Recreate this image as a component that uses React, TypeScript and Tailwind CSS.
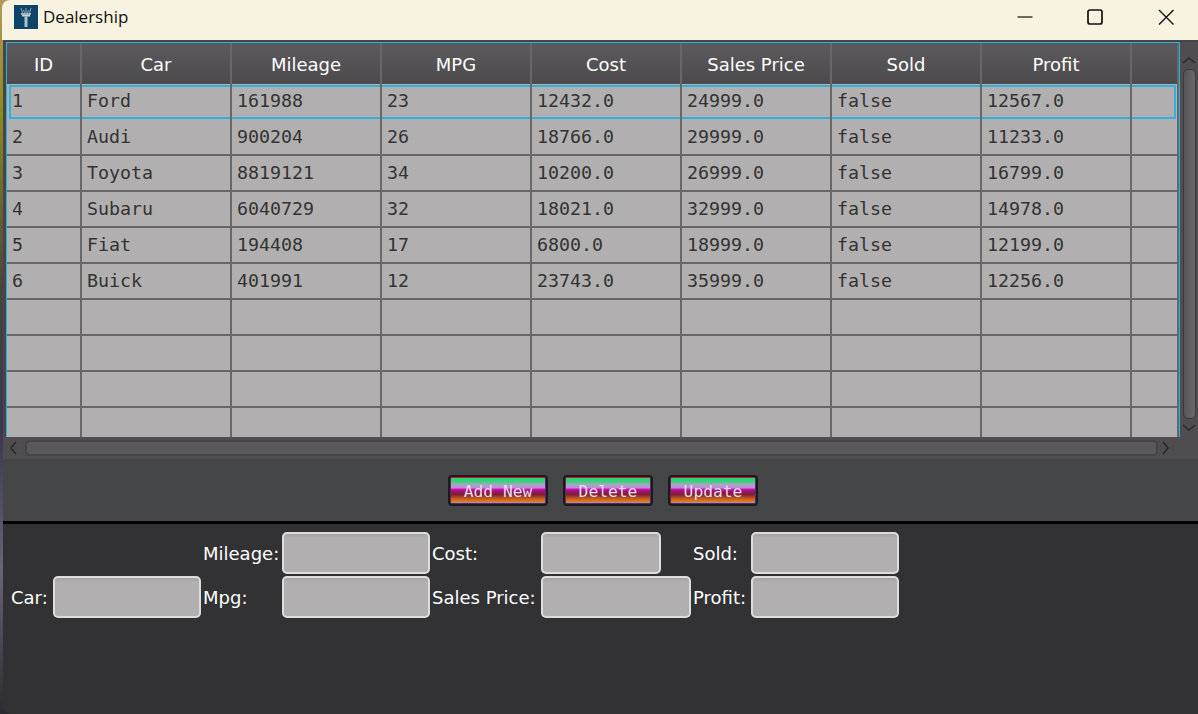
import React from 'react';

const COLUMNS = [
  { label: 'ID', width: 'w-[75px]' },
  { label: 'Car', width: 'w-[150px]' },
  { label: 'Mileage', width: 'w-[150px]' },
  { label: 'MPG', width: 'w-[150px]' },
  { label: 'Cost', width: 'w-[150px]' },
  { label: 'Sales Price', width: 'w-[150px]' },
  { label: 'Sold', width: 'w-[150px]' },
  { label: 'Profit', width: 'w-[150px]' },
  { label: '', width: 'flex-1' },
];

const CARS = [
  ['1', 'Ford', '161988', '23', '12432.0', '24999.0', 'false', '12567.0', ''],
  ['2', 'Audi', '900204', '26', '18766.0', '29999.0', 'false', '11233.0', ''],
  ['3', 'Toyota', '8819121', '34', '10200.0', '26999.0', 'false', '16799.0', ''],
  ['4', 'Subaru', '6040729', '32', '18021.0', '32999.0', 'false', '14978.0', ''],
  ['5', 'Fiat', '194408', '17', '6800.0', '18999.0', 'false', '12199.0', ''],
  ['6', 'Buick', '401991', '12', '23743.0', '35999.0', 'false', '12256.0', ''],
  ['', '', '', '', '', '', '', '', ''],
  ['', '', '', '', '', '', '', '', ''],
  ['', '', '', '', '', '', '', '', ''],
  ['', '', '', '', '', '', '', '', ''],
];

const TorchLogo = () => (
  <svg width="24" height="24" viewBox="0 0 24 24" className="shrink-0">
    <rect width="24" height="24" fill="#0d4468" />
    <path d="M7 3l1.500 5M9.500 5l1 3M12 3v5M14.500 5l-1 3M17 3l-1.500 5" stroke="#8ea6b3" strokeWidth="1" fill="none" />
    <rect x="7" y="8" width="10" height="2" fill="#9db1bc" />
    <rect x="8" y="10" width="8" height="1.500" fill="#c9d5da" />
    <rect x="10.500" y="11.500" width="3" height="10.500" fill="#aebfc8" />
  </svg>
);

const GradientButton = ({ label, width }: { label: string; width: string }) => (
  <button className={`${width} h-[31px] overflow-hidden rounded-[4px] border-2 border-[#1a1a20]`}>
    <span className="flex h-full w-full items-center justify-center rounded-[2px] border-t border-b border-x border-t-[#d8142c] border-b-[#1c34d0] border-l-[#6a2a50] border-r-[#5a2a70] bg-[linear-gradient(to_bottom,#20d870_0%,#3cd080_15%,#a0a8c0_25%,#c090d0_38%,#d000b8_47%,#901860_56%,#802030_66%,#c05a20_82%,#f08a20_100%)] pt-[4px] font-['DejaVu_Sans_Mono',monospace] text-[16.300px] text-[#e6dee6]">
      {label}
    </span>
  </button>
);

const Field = ({ label, input }: { label: string; input?: string }) => (
  <>
    <span className="flex items-center whitespace-nowrap font-['DejaVu_Sans',sans-serif] text-[18px] text-white">{label}</span>
    <input
      readOnly
      className={`${input ?? 'w-[148px]'} h-[42px] rounded-[5px] border-2 border-[#dedcdc] bg-[linear-gradient(to_bottom,#a6a4a4_0,#b1afaf_4px)] outline-none`}
    />
  </>
);

const Chevron = ({ d }: { d: string }) => (
  <svg width="14" height="14" viewBox="0 0 14 14" className="shrink-0">
    <path d={d} stroke="#2a2a2c" strokeWidth="1.600" fill="none" />
  </svg>
);

export default function App() {
  return (
    <div className="flex h-[714px] w-[1198px] flex-col overflow-hidden bg-[linear-gradient(to_bottom,#b09a5c_0%,#8a8a20_16%,#4a4440_40%,#3a3650_60%,#6a6478_80%,#2c2a30_100%)] font-['DejaVu_Sans',sans-serif]">
      {/* Title bar */}
      <div className="ml-[2px] flex h-[40px] shrink-0 items-center rounded-tl-[8px] bg-[#f8f3e0] pb-[6px] pl-[12px]">
        <TorchLogo />
        <span className="ml-[5px] font-['Open_Sans',sans-serif] text-[17px] text-[#111]">Dealership</span>
        <div className="ml-auto flex items-center">
          <svg width="16" height="16" viewBox="0 0 16 16"><path d="M0.500 8h15" stroke="#111" strokeWidth="1.200" /></svg>
          <svg width="16" height="16" viewBox="0 0 16 16" className="ml-[54px]"><rect x="1" y="1" width="14" height="14" rx="2" stroke="#111" strokeWidth="1.700" fill="none" /></svg>
          <svg width="16" height="16" viewBox="0 0 16 16" className="ml-[55px] mr-[24px]"><path d="M1 1l14.500 14.500M15.500 1L1 15.500" stroke="#111" strokeWidth="1.400" fill="none" /></svg>
        </div>
      </div>

      <div className="ml-[3px] flex flex-1 flex-col overflow-hidden rounded-bl-[8px]">
        {/* Table area */}
        <div className="flex h-[419px] shrink-0 flex-col bg-[#45454a]">
          <div className="flex h-[397px] shrink-0 pl-[3px] pt-[2px]">
            <div className="flex flex-1 flex-col overflow-hidden border-x border-t border-[#2bb0dc] bg-[#b1afaf]">
              <div className="flex h-[41px] shrink-0 bg-[linear-gradient(to_bottom,#5c5a5c,#4c4a4c)]">
                {COLUMNS.map((col, i) => (
                  <div
                    key={i}
                    className={`${col.width} flex items-center justify-center border-r-2 border-[#696767] pt-[2px] text-[18px] text-white`}
                  >
                    {col.label}
                  </div>
                ))}
              </div>
              <div className="flex-1 overflow-hidden">
                {CARS.map((row, r) => (
                  <div
                    key={r}
                    className={`relative flex h-[36px] font-['DejaVu_Sans_Mono',monospace] text-[18.300px] text-[#333] ${r === 0 ? '' : 'border-b-2 border-[#696767]'}`}
                  >
                    {r === 0 && <div className="absolute left-[2px] right-[3px] top-[1px] bottom-[1px] border-2 border-[#2fb2de]" />}
                    {row.map((cell, c) => (
                      <div
                        key={c}
                        className={`${COLUMNS[c].width} relative flex items-center border-r-2 border-[#696767] pl-[5px] ${r === 0 ? 'pb-[3px]' : 'pb-[1px]'}`}
                      >
                        {cell}
                      </div>
                    ))}
                  </div>
                ))}
              </div>
            </div>
            {/* Vertical scrollbar */}
            <div className="flex w-[18px] shrink-0 flex-col items-center bg-[#4f4d4f]">
              <div className="mt-[12px]"><Chevron d="M1 9l6-5 6 5" /></div>
              <div className="mt-[1px] h-[350px] w-[13px] rounded-[5px] border border-[#3c3a3c] bg-[linear-gradient(to_right,#575557,#6a686a)]" />
              <div className="mt-[1px]"><Chevron d="M1 5l6 5 6-5" /></div>
            </div>
          </div>
          {/* Horizontal scrollbar */}
          <div className="flex h-[22px] shrink-0 items-center bg-[#4f4d4f] pl-[4px]">
            <Chevron d="M9 1L4 7l5 6" />
            <div className="ml-[4px] h-[16px] w-[1133px] rounded-[5px] border-2 border-[#454345] bg-[#5a585a]" />
            <Chevron d="M5 1l5 6-5 6" />
          </div>
        </div>

        {/* Buttons */}
        <div className="flex h-[62px] shrink-0 items-center bg-[#454648] pl-[445px]">
          <GradientButton label="Add New" width="w-[100px]" />
          <div className="w-[15px]" />
          <GradientButton label="Delete" width="w-[90px]" />
          <div className="w-[15px]" />
          <GradientButton label="Update" width="w-[90px]" />
        </div>
        <div className="h-[3px] shrink-0 bg-black" />

        {/* Form */}
        <div className="flex-1 bg-[#323234] pl-[8px] pt-[8px]">
          <div className="grid grid-cols-[40px_148px_77px_148px_107px_150px_56px_148px] grid-rows-[42px_42px] gap-[2px]">
            <span />
            <span />
            <Field label="Mileage:" />
            <Field label="Cost:" input="w-[120px]" />
            <Field label="Sold:" />
            <Field label="Car:" />
            <Field label="Mpg:" />
            <Field label="Sales Price:" input="w-[150px]" />
            <Field label="Profit:" />
          </div>
        </div>
      </div>
    </div>
  );
}
